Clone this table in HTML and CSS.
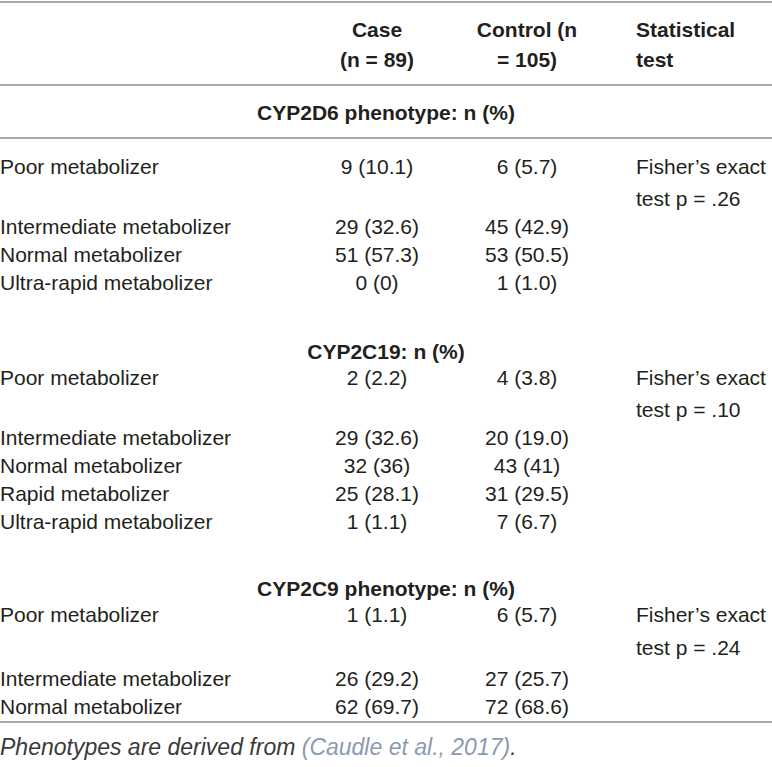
FILE: index.html
```html
<!DOCTYPE html>
<html lang="en">
<head>
<meta charset="utf-8">
<title>CYP phenotypes</title>
<link rel="stylesheet" href="styles.css">
</head>
<body>
<table class="tbl">
  <colgroup>
    <col class="c-label">
    <col class="c-case">
    <col class="c-ctrl">
    <col class="c-stat">
  </colgroup>
  <thead>
    <tr class="head">
      <th></th>
      <th class="num">Case<br>(n = 89)</th>
      <th class="num">Control (n<br>= 105)</th>
      <th class="stat">Statistical<br>test</th>
    </tr>
  </thead>
  <tbody>
    <tr class="section first"><th colspan="4">CYP2D6 phenotype: n (%)</th></tr>
    <tr class="poor top">
      <td>Poor metabolizer</td><td class="num">9 (10.1)</td><td class="num">6 (5.7)</td>
      <td class="stat"><span class="l1">Fisher’s exact</span><span class="l2">test p = .26</span></td>
    </tr>
    <tr><td>Intermediate metabolizer</td><td class="num">29 (32.6)</td><td class="num">45 (42.9)</td><td></td></tr>
    <tr><td>Normal metabolizer</td><td class="num">51 (57.3)</td><td class="num">53 (50.5)</td><td></td></tr>
    <tr><td>Ultra-rapid metabolizer</td><td class="num">0 (0)</td><td class="num">1 (1.0)</td><td></td></tr>

    <tr class="section s2"><th colspan="4">CYP2C19: n (%)</th></tr>
    <tr class="poor">
      <td>Poor metabolizer</td><td class="num">2 (2.2)</td><td class="num">4 (3.8)</td>
      <td class="stat"><span class="l1">Fisher’s exact</span><span class="l2">test p = .10</span></td>
    </tr>
    <tr><td>Intermediate metabolizer</td><td class="num">29 (32.6)</td><td class="num">20 (19.0)</td><td></td></tr>
    <tr><td>Normal metabolizer</td><td class="num">32 (36)</td><td class="num">43 (41)</td><td></td></tr>
    <tr><td>Rapid metabolizer</td><td class="num">25 (28.1)</td><td class="num">31 (29.5)</td><td></td></tr>
    <tr><td>Ultra-rapid metabolizer</td><td class="num">1 (1.1)</td><td class="num">7 (6.7)</td><td></td></tr>

    <tr class="section s3"><th colspan="4">CYP2C9 phenotype: n (%)</th></tr>
    <tr class="poor p3">
      <td>Poor metabolizer</td><td class="num">1 (1.1)</td><td class="num">6 (5.7)</td>
      <td class="stat"><span class="l1">Fisher’s exact</span><span class="l2">test p = .24</span></td>
    </tr>
    <tr><td>Intermediate metabolizer</td><td class="num">26 (29.2)</td><td class="num">27 (25.7)</td><td></td></tr>
    <tr class="last"><td>Normal metabolizer</td><td class="num">62 (69.7)</td><td class="num">72 (68.6)</td><td></td></tr>
  </tbody>
</table>
<p class="note">Phenotypes are derived from <span class="ref">(Caudle et al., 2017)</span>.</p>
</body>
</html>
```

FILE: styles.css
```css
html, body {
  margin: 0;
  padding: 0;
  background: #ffffff;
}

body {
  font-family: "Liberation Sans", Arial, Helvetica, sans-serif;
  font-size: 21px;
  color: #231f20;
}

.tbl {
  width: 772px;
  margin-top: 1px;
  border-collapse: collapse;
  table-layout: fixed;
  border-top: 2px solid #a9a9a9;
}

.c-label { width: 300px; }
.c-case { width: 154px; }
.c-ctrl { width: 146px; }
.c-stat { width: 172px; }

.tbl th,
.tbl td {
  padding: 0;
  vertical-align: top;
  line-height: 28px;
  font-weight: 400;
  text-align: left;
  white-space: nowrap;
}

.tbl .num { text-align: center; }
.tbl .stat { padding-left: 36px; }

.head th {
  font-weight: 700;
  line-height: 30px;
  padding-top: 12px;
  padding-bottom: 9px;
  border-bottom: 2px solid #a9a9a9;
}

.head th.stat { padding-left: 36px; }

.section th {
  font-weight: 700;
  text-align: center;
  line-height: 24px;
}

.section.first th {
  padding-top: 15px;
  padding-bottom: 12px;
  border-bottom: 2px solid #a9a9a9;
}

.section.s2 th { padding-top: 43px; }
.section.s3 th { padding-top: 41px; }

.poor.top td { padding-top: 14px; }

.stat .l1,
.stat .l2 { display: block; }
.stat .l2 { padding-top: 4px; }

.poor.p3 td.stat { padding-bottom: 3px; }
.poor.p3 .l2 { padding-top: 5px; }

.last td {
  border-bottom: 2px solid #a9a9a9;
}

.note {
  margin: 0;
  padding-top: 9px;
  line-height: 30px;
  font-size: 23px;
  font-style: italic;
  color: #3a3a3a;
}

.note .ref { color: #8a9ab0; }
```
